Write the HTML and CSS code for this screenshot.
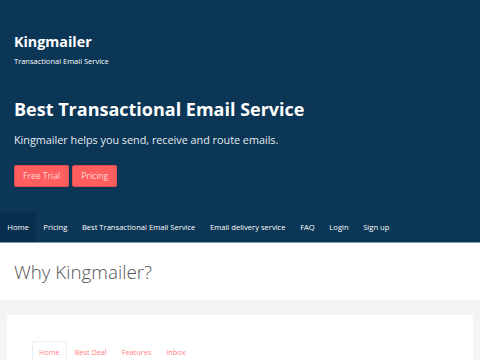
FILE: index.html
```html
<!DOCTYPE html>
<html>
<head>
    <title>Kingmailer - Transactional Email Service</title>
    <link rel="stylesheet" href="styles.css">
</head>
<body>
    <header class="hero">
        <div class="brand">
            <h3 class="brand-name">Kingmailer</h3>
            <p class="brand-tagline">Transactional Email Service</p>
        </div>
        <h1 class="hero-title">Best Transactional Email Service</h1>
        <p class="hero-lead">Kingmailer helps you send, receive and route emails.</p>
        <div class="hero-actions">
            <a class="btn" href="#">Free Trial</a>
            <a class="btn" href="#">Pricing</a>
        </div>
    </header>
    <nav class="topnav">
        <a class="active" href="#">Home</a>
        <a href="#">Pricing</a>
        <a href="#">Best Transactional Email Service</a>
        <a href="#">Email delivery service</a>
        <a href="#">FAQ</a>
        <a href="#">Login</a>
        <a href="#">Sign up</a>
    </nav>
    <section class="intro">
        <h2>Why Kingmailer?</h2>
    </section>
    <section class="features">
        <div class="card">
            <ul class="tabs">
                <li class="active">Home</li>
                <li>Best Deal</li>
                <li>Features</li>
                <li>Inbox</li>
            </ul>
        </div>
    </section>
</body>
</html>
```

FILE: styles.css
```css
body {
    font-family: "Open Sans", Arial, sans-serif;
    margin: 0;
    padding: 0;
    color: #555;
}
.hero {
    background-color: #0b3656;
    color: white;
    padding: 33px 14px 25px;
}
.brand-name {
    font-size: 14.3px;
    font-weight: 700;
    margin: 0;
    line-height: 18px;
}
.brand-tagline {
    font-size: 7.5px;
    margin: 5px 0 0;
    line-height: 11px;
}
.hero-title {
    font-size: 18px;
    font-weight: 700;
    margin: 29px 0 0;
    line-height: 26px;
}
.hero-lead {
    font-size: 10.8px;
    margin: 10px 0 0;
    line-height: 16px;
    color: #e6ebf0;
}
.hero-actions {
    display: flex;
    gap: 3px;
    margin-top: 17px;
}
.btn {
    display: block;
    background-color: #ff5e5e;
    color: #ffd9d9;
    font-size: 8.6px;
    line-height: 20px;
    padding: 0 8px;
    border: 1px solid #e04e55;
    border-radius: 2px;
    text-decoration: none;
}
.topnav {
    display: flex;
    background-color: #0b3656;
    border-bottom: 1px solid #7d9ab3;
    height: 30px;
    align-items: stretch;
}
.topnav a {
    display: flex;
    align-items: center;
    padding: 0 7.3px;
    color: white;
    font-size: 7.6px;
    text-decoration: none;
}
.topnav a.active {
    background-color: #08304e;
}
.intro {
    padding: 0 14px;
    height: 57px;
    display: flex;
    align-items: center;
}
.intro h2 {
    font-size: 18.8px;
    font-weight: 300;
    margin: 0;
    color: #555;
}
.features {
    background-color: #f4f4f4;
    padding: 15px 7px 0;
}
.card {
    background-color: white;
    padding: 26px 25px 0;
    height: 60px;
}
.tabs {
    list-style: none;
    display: flex;
    gap: 1px;
    margin: 0;
    padding: 0;
}
.tabs li {
    color: #ff7f7f;
    font-size: 7.3px;
    padding: 5px 6px;
    border: 1px solid transparent;
    border-bottom: none;
}
.tabs li.active {
    border-color: #eee;
}
```
